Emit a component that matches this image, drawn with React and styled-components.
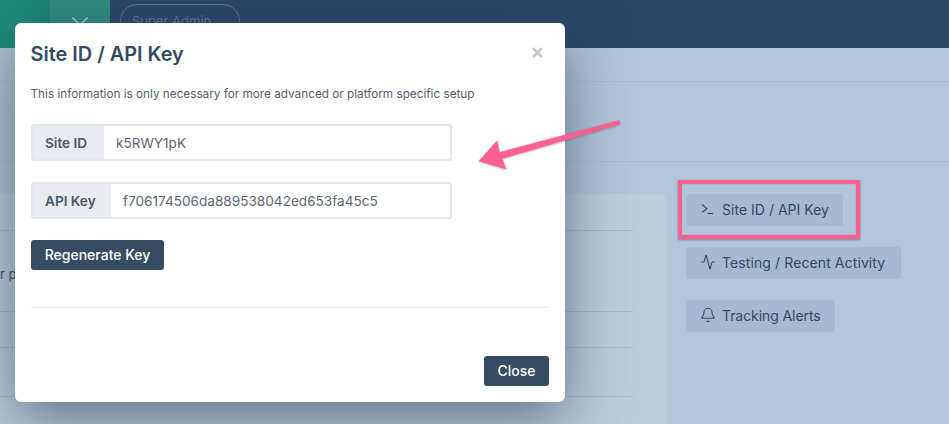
import React from 'react';
import styled, { createGlobalStyle } from 'styled-components';
import { X, Activity, Bell } from 'lucide-react';

const Global = createGlobalStyle`
  html, body { margin: 0; padding: 0; background: #b2c5da; }
  body { font-family: Inter, "Noto Sans", sans-serif; }
  * { box-sizing: border-box; }
`;
const Page = styled.div`
  position: relative; width: 949px; height: 424px; overflow: hidden; background: #b2c5da;
  color: #344a61;
`;
const TopBar = styled.header`
  display: flex; align-items: center; height: 48px; background: #2b4767;
`;
const Brand = styled.div`width: 50px; height: 48px; background: linear-gradient(100deg, #1b8d78, #1f8572);`;
const Toggler = styled.div`
  width: 60px; height: 48px; background: #2f8c80; color: #8fc2bb;
  display: flex; justify-content: center; align-items: flex-start; padding-top: 11px;
`;
const RoleBadge = styled.div`
  margin: 4px 0 0 10px; align-self: flex-start; width: 120px; height: 34px; border: 1px solid #5b7490; border-radius: 17px;
  color: #5f7890; font-size: 13px; padding: 8px 11px; white-space: nowrap;
`;
const SubBar = styled.div`height: ${p => p.$h}px; border-bottom: 1px solid #a9bdd2;`;
const Content = styled.div`display: flex; padding-top: 32px;`;
const Card = styled.section`
  width: 666px; height: 260px; background: #bbcddd; border-radius: 0 6px 6px 0; padding-right: 33px;
  font-size: 13px; color: #3b5066;
`;
const CardRow = styled.div`
  height: ${p => p.$h}px; border-bottom: 1px solid #a6b9cf; padding-top: ${p => p.$pt || 0}px;
`;
const Side = styled.aside`display: flex; flex-direction: column; align-items: flex-start; gap: 21px; padding-left: 20px;`;
const SideButton = styled.div`
  display: flex; align-items: center; gap: 6px; height: 32px; width: ${p => p.$w}px; padding: 0 14px 2px; background: #a5bad2; border-radius: 3px;
  color: #344a61; font-size: 14px; letter-spacing: ${p => p.$ls}px; white-space: nowrap;
`;
const Highlight = styled.div`
  position: absolute; left: 678px; top: 180px; width: 182px; height: 59px;
  border: 4px solid #fb5f8f; box-shadow: 0 1px 2px rgba(50,70,90,.5), inset 0 0 1px rgba(50,70,90,.5);
`;
const Arrow = styled.svg`position: absolute; left: 470px; top: 112px; filter: drop-shadow(0 1px 1px rgba(50,70,90,.35));`;
const Modal = styled.div`
  position: absolute; left: 15px; top: 23px; width: 550px; height: 379px; background: #fff; border-radius: 6px;
  padding: 0 16px; box-shadow: 0 18px 60px rgba(40,60,80,.62);
`;
const ModalHead = styled.div`display: flex; justify-content: space-between; align-items: center; height: 62px;`;
const Title = styled.h2`margin: 0 0 0 -0.5px; font-size: 19.9px; line-height: 24px; font-weight: 600; color: #344a61;`;
const Dismiss = styled.div`color: #c4c6c8; display: flex; margin: 0 4px 4px 0;`;
const Hint = styled.p`margin: 0 0 0 -0.5px; height: 39px; padding-top: 2px; font-size: 11.75px; line-height: 15px; color: #55606b; white-space: nowrap;`;
const InputGroup = styled.div`
  display: flex; width: 421px; height: 37px; margin-bottom: 21px; border: 2px solid #e2e7ef; border-radius: 3px; font-size: 13.6px;
`;
const Addon = styled.div`
  display: flex; align-items: center; width: ${p => p.$w}px; padding-left: 12px; background: #e8ebf0; font-weight: 600; color: #4a5865; white-space: nowrap;
`;
const Value = styled.div`display: flex; align-items: center; padding-left: 12px; color: #5b6670; white-space: nowrap;`;
const DarkButton = styled.div`
  display: inline-flex; align-items: center; justify-content: center; height: 30px; width: ${p => p.$w}px;
  background: #354c63; color: #fff; border-radius: 3px; font-size: 14px; font-weight: 500; white-space: nowrap; padding-bottom: 2px;
`;
const Divider = styled.hr`margin: 37px 0 48px; border: 0; border-top: 1px solid #e6e8ea;`;
const Foot = styled.div`display: flex; justify-content: flex-end;`;

const TerminalIcon = () => (
  <svg width="16" height="16" viewBox="0 0 16 16" fill="none" stroke="#344a61" strokeWidth="1.1">
    <path d="M2 3.5 6.8 7.6 2 11.5" />
    <path d="M7.5 12.5h5.5" />
  </svg>
);

export default function App() {
  return (
    <Page>
      <Global />
      <TopBar>
        <Brand />
        <Toggler><X size={28} strokeWidth={1.7} /></Toggler>
        <RoleBadge>Super Admin</RoleBadge>
      </TopBar>
      <SubBar $h={34} />
      <SubBar $h={80} />
      <Content>
        <Card>
          <CardRow $h={37} />
          <CardRow $h={81} $pt={35}>r p</CardRow>
          <CardRow $h={36} />
          <CardRow $h={49} />
        </Card>
        <Side>
          <SideButton $w={157} $ls={0.02}><TerminalIcon />Site ID / API Key</SideButton>
          <SideButton $w={215} $ls={0.1}><Activity size={16} strokeWidth={1.6} />Testing / Recent Activity</SideButton>
          <SideButton $w={149} $ls={-0.08}><Bell size={16} strokeWidth={1.6} />Tracking Alerts</SideButton>
        </Side>
      </Content>
      <Highlight />
      <Modal>
        <ModalHead>
          <Title>Site ID / API Key</Title>
          <Dismiss><X size={15} strokeWidth={4} /></Dismiss>
        </ModalHead>
        <Hint>This information is only necessary for more advanced or platform specific setup</Hint>
        <InputGroup>
          <Addon $w={71}>Site ID</Addon>
          <Value>k5RWY1pK</Value>
        </InputGroup>
        <InputGroup>
          <Addon $w={78}>API Key</Addon>
          <Value>f706174506da889538042ed653fa45c5</Value>
        </InputGroup>
        <DarkButton $w={133}>Regenerate Key</DarkButton>
        <Divider />
        <Foot><DarkButton $w={65}>Close</DarkButton></Foot>
      </Modal>
      <Arrow width="152" height="62" viewBox="0 0 152 62">
        <path d="M149 8.5 L150 12 L32 46.5 L36 57 L9 49 L27 29 L29.5 40.5 Z" fill="#fb5f8f" stroke="#fb5f8f" strokeWidth="0.6" strokeLinejoin="round" />
      </Arrow>
    </Page>
  );
}
